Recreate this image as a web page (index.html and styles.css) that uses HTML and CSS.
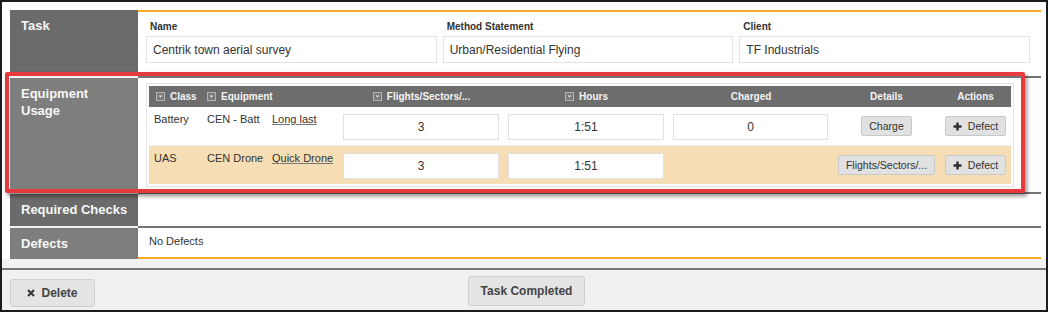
FILE: index.html
```html
<!DOCTYPE html>
<html lang="en">
<head>
  <meta charset="UTF-8">
  <title>Task – Equipment Usage</title>
  <link rel="stylesheet" href="styles.css">
</head>
<body>

  <div class="frame">
    <div class="form">

      <!-- Task -->
      <div class="row row-first">
        <div class="row-label">Task</div>
        <div class="row-body task-fields">
          <label class="field">
            <span class="field-label">Name</span>
            <input class="text-input" type="text" value="Centrik town aerial survey" readonly>
          </label>
          <label class="field">
            <span class="field-label">Method Statement</span>
            <input class="text-input" type="text" value="Urban/Residential Flying" readonly>
          </label>
          <label class="field">
            <span class="field-label">Client</span>
            <input class="text-input" type="text" value="TF Industrials" readonly>
          </label>
        </div>
      </div>

      <!-- Equipment usage -->
      <div class="row row-alt">
        <div class="row-label">Equipment Usage</div>
        <div class="row-body equip-body">
          <div class="grid-wrap">
            <table class="grid">
              <colgroup>
                <col style="width:53px">
                <col style="width:65px">
                <col style="width:72px">
                <col style="width:165px">
                <col style="width:165px">
                <col style="width:164px">
                <col style="width:107px">
                <col>
              </colgroup>
              <thead>
                <tr>
                  <th class="th-first"><svg class="filter-icon" viewBox="0 0 9 9" width="9" height="9"><rect x="0.5" y="0.5" width="8" height="8" fill="#7b7b7b" stroke="#b3b3b3"/><path d="M2.6 3.6h3.8L4.5 5.6z" fill="#e8e8e8"/></svg>Class</th>
                  <th colspan="2"><svg class="filter-icon" viewBox="0 0 9 9" width="9" height="9"><rect x="0.5" y="0.5" width="8" height="8" fill="#7b7b7b" stroke="#b3b3b3"/><path d="M2.6 3.6h3.8L4.5 5.6z" fill="#e8e8e8"/></svg>Equipment</th>
                  <th class="center"><svg class="filter-icon" viewBox="0 0 9 9" width="9" height="9"><rect x="0.5" y="0.5" width="8" height="8" fill="#7b7b7b" stroke="#b3b3b3"/><path d="M2.6 3.6h3.8L4.5 5.6z" fill="#e8e8e8"/></svg>Flights/Sectors/...</th>
                  <th class="center"><svg class="filter-icon" viewBox="0 0 9 9" width="9" height="9"><rect x="0.5" y="0.5" width="8" height="8" fill="#7b7b7b" stroke="#b3b3b3"/><path d="M2.6 3.6h3.8L4.5 5.6z" fill="#e8e8e8"/></svg>Hours</th>
                  <th class="center">Charged</th>
                  <th class="center">Details</th>
                  <th class="center">Actions</th>
                </tr>
              </thead>
              <tbody>
                <tr>
                  <td class="td-first">Battery</td>
                  <td>CEN - Batt</td>
                  <td><a class="equip-link">Long last</a></td>
                  <td class="input-cell"><input class="cell-input" type="text" value="3" readonly></td>
                  <td class="input-cell"><input class="cell-input" type="text" value="1:51" readonly></td>
                  <td class="input-cell"><input class="cell-input" type="text" value="0" readonly></td>
                  <td class="btn-cell"><button class="btn">Charge</button></td>
                  <td class="btn-cell"><button class="btn"><svg class="plus-icon" viewBox="0 0 9 9" width="9" height="9"><path d="M4.5 0.5v8M0.5 4.5h8" stroke="#2e2e2e" stroke-width="2.4"/></svg>Defect</button></td>
                </tr>
                <tr class="row-uas">
                  <td class="td-first">UAS</td>
                  <td>CEN Drone</td>
                  <td><a class="equip-link">Quick Drone</a></td>
                  <td class="input-cell"><input class="cell-input" type="text" value="3" readonly></td>
                  <td class="input-cell"><input class="cell-input" type="text" value="1:51" readonly></td>
                  <td></td>
                  <td class="btn-cell"><button class="btn">Flights/Sectors/...</button></td>
                  <td class="btn-cell"><button class="btn"><svg class="plus-icon" viewBox="0 0 9 9" width="9" height="9"><path d="M4.5 0.5v8M0.5 4.5h8" stroke="#2e2e2e" stroke-width="2.4"/></svg>Defect</button></td>
                </tr>
              </tbody>
            </table>
          </div>
        </div>
      </div>

      <!-- Required checks -->
      <div class="row">
        <div class="row-label nowrap">Required Checks</div>
        <div class="row-body checks-body"></div>
      </div>

      <!-- Defects -->
      <div class="row row-alt row-last">
        <div class="row-label">Defects</div>
        <div class="row-body defects-body">No Defects</div>
      </div>

    </div>

    <div class="footer">
      <button class="btn-lg btn-delete"><svg class="x-icon" viewBox="0 0 8 8" width="8" height="8"><path d="M1 1l6 6M7 1L1 7" stroke="#3a3a3a" stroke-width="2.2"/></svg>Delete</button>
      <button class="btn-lg btn-complete">Task Completed</button>
      <span></span>
    </div>

    <!-- highlight drawn over the screenshot -->
    <div class="callout"></div>
  </div>

</body>
</html>
```

FILE: styles.css
```css
:root {
  --label-bg: #6b6b6b;
  --label-bg-alt: #7e7e7e;
  --rule: #747474;
  --accent: #f7a826;
  --text: #333;
  --button-bg: #e1e1e1;
  --button-border: #c9c9c9;
  --callout: #e8393e;
}

body {
  margin: 0;
  font-family: "Liberation Sans", Arial, sans-serif;
  color: var(--text);
}

.frame {
  position: relative;
  width: 1048px;
  height: 312px;
  box-sizing: border-box;
  border: 2px solid #1c1c1c;
  background: #f2f2f2;
  display: flex;
  flex-direction: column;
  overflow: hidden;
}

.form {
  background: #fff;
  padding: 8px 5px 0 8px;
  margin-bottom: 9px;
}

/* rows : grey label on the left, body on the right */
.row {
  display: flex;
}

.row-label {
  width: 128px;
  flex: none;
  box-sizing: border-box;
  padding: 7px 11px 6px;
  background: var(--label-bg);
  border-top: 2px solid #f1f1f1;
  color: #f7f7f7;
  font-size: 13px;
  font-weight: bold;
  line-height: 17px;
}

.row-label.nowrap { white-space: nowrap; }

.row-alt .row-label { background: var(--label-bg-alt); }

.row-body {
  flex: 1;
  min-width: 0;
  border-top: 2px solid var(--rule);
}

.row-first .row-label { border-top: none; }
.row-first .row-body { border-top-color: var(--accent); }
.row-last .row-body { border-bottom: 2px solid var(--accent); }

/* task fields */
.task-fields {
  display: grid;
  grid-template-columns: repeat(3, 1fr);
  gap: 6px;
  padding: 8px 11px 13px 8px;
}

.field { display: block; }

.field-label {
  display: block;
  padding-left: 4px;
  margin-bottom: 2px;
  font-size: 10px;
  font-weight: bold;
  line-height: 14px;
}

.text-input {
  display: block;
  width: 100%;
  height: 27px;
  box-sizing: border-box;
  margin: 0;
  padding: 0 6px;
  border: 1px solid #e3e3e3;
  background: #fff;
  color: var(--text);
  font: 12px "Liberation Sans", Arial, sans-serif;
  outline: none;
}

/* equipment grid */
.equip-body { padding: 5px 0 5px 8px; }

.grid-wrap {
  width: 862px;
  padding: 2px;
  border: 1px solid #e6e6e6;
}

.grid {
  width: 862px;
  border-collapse: collapse;
  table-layout: fixed;
}

.grid th {
  height: 21px;
  padding: 0 5px;
  background: #6d6d6d;
  color: #f4f4f4;
  font-size: 10px;
  font-weight: bold;
  text-align: left;
  white-space: nowrap;
}

.grid th.th-first { padding-left: 7px; }
.grid th.center { text-align: center; }

.filter-icon {
  display: inline-block;
  vertical-align: -1px;
  margin-right: 5px;
}

.grid td {
  padding: 6px 5px 5px;
  vertical-align: top;
  font-size: 11px;
  line-height: 13px;
  white-space: nowrap;
}

.row-uas td {
  background: #f5deb3;
  border-top: 1px solid #eee;
}

.equip-link {
  color: var(--text);
  text-decoration: underline;
  text-decoration-color: #777;
}

.grid td.input-cell { padding: 7px 5px 5px 4px; }

.cell-input {
  display: block;
  width: 100%;
  height: 26px;
  box-sizing: border-box;
  margin: 0;
  border: 1px solid #e1e1e1;
  background: #fff;
  color: var(--text);
  font: 12px "Liberation Sans", Arial, sans-serif;
  text-align: center;
  outline: none;
}

.grid td.btn-cell {
  padding: 9px 0 0;
  text-align: center;
}

.btn {
  display: inline-flex;
  align-items: center;
  gap: 6px;
  height: 20px;
  padding: 0 7px;
  background: var(--button-bg);
  border: 1px solid var(--button-border);
  border-radius: 2px;
  color: var(--text);
  font: 10.5px "Liberation Sans", Arial, sans-serif;
}

.plus-icon { display: block; }

/* checks / defects */
.checks-body { min-height: 32px; }

.defects-body {
  padding: 7px 11px 9px;
  font-size: 11px;
  line-height: 13px;
}

/* footer */
.footer {
  flex: 1;
  min-height: 0;
  display: grid;
  grid-template-columns: 1fr auto 1fr;
  align-items: start;
  padding: 0 3px 0 8px;
  border-top: 2px solid #777;
  background: #f0f0f0;
}

.btn-lg {
  display: inline-flex;
  align-items: center;
  justify-content: center;
  gap: 6px;
  background: #e4e4e4;
  border: 1px solid #cfcfcf;
  border-radius: 3px;
  color: #444;
  font: bold 12px "Liberation Sans", Arial, sans-serif;
}

.btn-delete {
  justify-self: start;
  width: 85px;
  height: 28px;
  margin-top: 9px;
  padding: 0 16px;
}

.x-icon { display: block; }

.btn-complete {
  height: 30px;
  margin-top: 6px;
  padding: 0 12px;
}

/* red highlight box */
.callout {
  position: absolute;
  left: 3px;
  top: 70px;
  width: 1020px;
  height: 121px;
  box-sizing: border-box;
  border: 4px solid var(--callout);
  border-radius: 2px;
  box-shadow: 2px 3px 4px rgba(0, 0, 0, 0.45);
  pointer-events: none;
}
```
